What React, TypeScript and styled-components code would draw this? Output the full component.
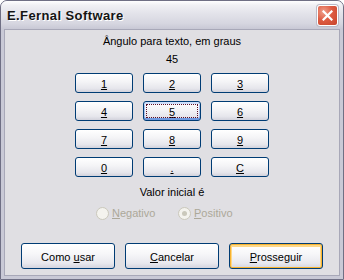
import styled, { createGlobalStyle } from "styled-components";

const GlobalStyle = createGlobalStyle`
  html, body {
    margin: 0;
    padding: 0;
    background: #ffffff;
  }
  * {
    box-sizing: border-box;
  }
`;

const keys = [
  ["1", "2", "3"],
  ["4", "5", "6"],
  ["7", "8", "9"],
  ["0", ".", "C"],
];

const App = () => {
  return (
    <>
      <GlobalStyle />
      <Window>
        <TitleBar>
          <Title>E.Fernal Software</Title>
          <CloseButton aria-label="Fechar">
            <svg width="11" height="11" viewBox="0 0 11 11">
              <path
                d="M1.5 1.5 L9.5 9.5 M9.5 1.5 L1.5 9.5"
                stroke="#ffffff"
                strokeWidth="2.2"
                strokeLinecap="square"
              />
            </svg>
          </CloseButton>
        </TitleBar>
        <Client>
          <Label>Ângulo para texto, em graus</Label>
          <Value>45</Value>
          <Keypad>
            {keys.flat().map((k) => (
              <KeyButton key={k} $focused={k === "5"}>
                <u>{k}</u>
              </KeyButton>
            ))}
          </Keypad>
          <SubLabel>Valor inicial é</SubLabel>
          <RadioRow>
            <RadioItem>
              <RadioCircle />
              <span>
                <u>N</u>egativo
              </span>
            </RadioItem>
            <RadioItem>
              <RadioCircle $checked />
              <span>
                <u>P</u>ositivo
              </span>
            </RadioItem>
          </RadioRow>
          <ActionRow>
            <ActionButton>
              <span>
                Como <u>u</u>sar
              </span>
            </ActionButton>
            <ActionButton>
              <span>
                <u>C</u>ancelar
              </span>
            </ActionButton>
            <ActionButton $default>
              <span>
                <u>P</u>rosseguir
              </span>
            </ActionButton>
          </ActionRow>
        </Client>
      </Window>
    </>
  );
};

export default App;

const Window = styled.div`
  width: 344px;
  height: 280px;
  display: flex;
  flex-direction: column;
  border: 1px solid #6f6f84;
  border-radius: 7px 7px 0 0;
  background: #c9c9d6;
  overflow: hidden;
  font-family: "Liberation Sans", Arial, sans-serif;
`;

const TitleBar = styled.div`
  height: 28px;
  flex-shrink: 0;
  display: flex;
  align-items: center;
  justify-content: space-between;
  padding: 0 5px 0 6px;
  background: linear-gradient(
    to bottom,
    #ffffff 0%,
    #f0f0f4 15%,
    #e3e3ea 45%,
    #d6d6e0 80%,
    #c8c8d5 100%
  );
`;

const Title = styled.div`
  font-size: 13px;
  font-weight: 700;
  color: #141414;
  letter-spacing: 0.4px;
  text-shadow: 1px 1px 0 #ffffff;
  padding-top: 1px;
`;

const CloseButton = styled.div`
  width: 21px;
  height: 21px;
  border: 1px solid #ffffff;
  border-radius: 3px;
  display: flex;
  align-items: center;
  justify-content: center;
  background: radial-gradient(
    circle at 30% 30%,
    #f0a08c 0%,
    #de5c43 45%,
    #c7432a 100%
  );
  box-shadow: 0 0 0 1px #b9b9c6;
`;

const Client = styled.div`
  flex: 1;
  margin: 0 3px 3px 3px;
  border: 1px solid #a8a8b8;
  background: #e0dfe3;
  display: flex;
  flex-direction: column;
  align-items: center;
  padding-top: 4px;
  font-size: 11px;
  color: #000000;
`;

const Label = styled.div`
  height: 14px;
  line-height: 14px;
`;

const Value = styled.div`
  height: 14px;
  line-height: 14px;
  margin-top: 4px;
`;

const Keypad = styled.div`
  margin-top: 7px;
  display: grid;
  grid-template-columns: repeat(3, 58px);
  grid-auto-rows: 20px;
  column-gap: 10px;
  row-gap: 8px;
`;

const KeyButton = styled.div<{ $focused?: boolean }>`
  position: relative;
  display: flex;
  align-items: center;
  justify-content: center;
  border: 1px solid #003c74;
  border-radius: 3px;
  background: linear-gradient(
    to bottom,
    #ffffff 0%,
    #f5f5f7 40%,
    #e6e6ec 80%,
    #d2d2dc 100%
  );
  font-size: 11px;
  color: #000000;
  padding-top: 1px;
  box-shadow: ${(p) =>
    p.$focused
      ? "inset 0 -2px 0 #6f9ae0, inset 0 2px 0 #cfe0fb, inset 1px 0 0 #a7c1f0, inset -1px 0 0 #a7c1f0"
      : "none"};

  &::after {
    content: "";
    display: ${(p) => (p.$focused ? "block" : "none")};
    position: absolute;
    inset: 2px;
    border: 1px dotted #5a0f28;
    pointer-events: none;
  }
`;

const SubLabel = styled.div`
  height: 14px;
  line-height: 14px;
  margin-top: 8px;
`;

const RadioRow = styled.div`
  align-self: flex-start;
  margin-top: 6px;
  padding-left: 91px;
  display: flex;
  height: 16px;
`;

const RadioItem = styled.div`
  width: 82px;
  display: flex;
  align-items: center;
  gap: 3px;
  color: #aca899;
  font-size: 11px;
`;

const RadioCircle = styled.div<{ $checked?: boolean }>`
  width: 13px;
  height: 13px;
  border-radius: 50%;
  border: 1px solid #cac8bb;
  background: #f4f3ee;
  display: flex;
  align-items: center;
  justify-content: center;

  &::after {
    content: "";
    display: ${(p) => (p.$checked ? "block" : "none")};
    width: 5px;
    height: 5px;
    border-radius: 50%;
    background: #cac8bb;
  }
`;

const ActionRow = styled.div`
  margin-top: 22px;
  display: flex;
  gap: 10px;
`;

const ActionButton = styled.div<{ $default?: boolean }>`
  width: 94px;
  height: 26px;
  display: flex;
  align-items: center;
  justify-content: center;
  border: 1px solid #003c74;
  border-radius: 3px;
  background: linear-gradient(
    to bottom,
    #ffffff 0%,
    #f7f7f9 40%,
    #e8e8ee 80%,
    #d4d4de 100%
  );
  font-size: 11px;
  color: #000000;
  padding-top: 1px;
  box-shadow: ${(p) =>
    p.$default
      ? "inset 0 0 0 1px #f8b330, inset 0 1px 0 2px #fdd889"
      : "none"};
`;
